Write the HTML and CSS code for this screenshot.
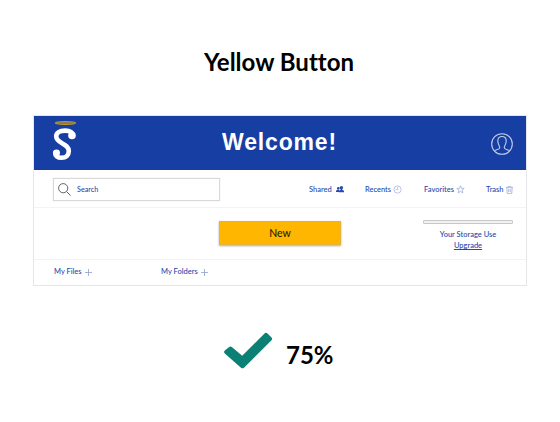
FILE: index.html
```html
<!DOCTYPE html>
<html lang="en">
<head>
<meta charset="utf-8">
<title>Yellow Button</title>
<link rel="stylesheet" href="styles.css">
</head>
<body>
<h1 class="title">Yellow Button</h1>
<main class="panel">
  <header class="banner">
    <svg class="logo" width="26" height="42" viewBox="0 0 26 42" fill="none">
      <ellipse cx="13.5" cy="3" rx="10" ry="1.3" fill="#776f60" stroke="#c39a22" stroke-width="1.2"/>
      <path d="M20.5 16C21 12.5 18 10.6 13.2 10.6C7.5 10.6 4.2 12.8 4.2 16.3C4.2 24 16.8 23 16.8 31C16.8 35.2 14 37.8 9.5 37.8C5.5 37.8 3 36 3.2 32.5" stroke="#fff" stroke-width="4.6" stroke-linecap="round"/>
      <circle cx="20" cy="15.4" r="3.8" fill="#fff"/>
      <circle cx="4.6" cy="32.8" r="3.4" fill="#fff"/>
    </svg>
    <h2 class="welcome">Welcome!</h2>
    <svg class="avatar" width="24" height="24" viewBox="0 0 24 24" fill="none" stroke="#c3cee9" stroke-width="1.1">
      <circle cx="12" cy="12" r="10.3"/>
      <path d="M4.2 19C5.5 17.4 9.8 17.8 9.8 15.5C9.8 14 7.8 12.7 7.8 9C7.8 6 9.4 4.5 12 4.5S16.2 6 16.2 9C16.2 12.7 14.2 14 14.2 15.5C14.2 17.8 18.5 17.4 19.8 19"/>
    </svg>
  </header>
  <nav class="toolbar">
    <div class="search">
      <svg width="13" height="13" viewBox="0 0 13 13" fill="none" stroke="#626262"><circle cx="5.2" cy="5.2" r="4.6"/><path d="M8.6 8.6L12.5 12.5"/></svg>
      <span>Search</span>
    </div>
    <a class="link shared">Shared
      <svg width="8" height="7" viewBox="0 0 8 7" fill="#294bad"><circle cx="2.3" cy="2.2" r="1.3"/><path d="M0 6V4.8L1.7 3.6H3V6z"/><circle cx="5.4" cy="1.7" r="1.7"/><path d="M2.8 6.2V4.8L4.7 3.8V3H6.1V3.8L8 4.8V6.2z"/></svg>
    </a>
    <a class="link recents">Recents
      <svg width="9" height="9" viewBox="0 0 9 9" fill="none" stroke="#9dadd8" stroke-width=".7"><circle cx="4.5" cy="4.5" r="3.6"/><path d="M4.7 2V4.7H2.5"/></svg>
    </a>
    <a class="link favorites">Favorites
      <svg width="9" height="9" viewBox="0 0 9 9" fill="none" stroke="#8fa2d4" stroke-width=".7"><path d="M4.5 .8L5.5 3.3L8.2 3.5L6.1 5.2L6.8 7.9L4.5 6.4L2.2 7.9L2.9 5.2L.8 3.5L3.5 3.3z"/></svg>
    </a>
    <a class="link trash">Trash
      <svg width="7" height="8" viewBox="0 0 7 8" fill="none" stroke="#8fa2d4" stroke-width=".7"><path d="M0 1.4H7M2.3 1.2V.4H4.7V1.2M.9 1.5L1.2 7.4H5.8L6.1 1.5M2.7 2.8V6M4.3 2.8V6"/></svg>
    </a>
  </nav>
  <section class="actions">
    <button class="new">New</button>
    <div class="storage">
      <div class="meter"></div>
      <span>Your Storage Use</span>
      <a class="upgrade">Upgrade</a>
    </div>
  </section>
  <footer class="files">
    <span class="group my-files">My Files <svg width="7" height="7" viewBox="0 0 7 7" stroke="#8ca0d3" stroke-width=".8"><path d="M3.5 0V7M0 3.5H7"/></svg></span>
    <span class="group">My Folders <svg width="7" height="7" viewBox="0 0 7 7" stroke="#8ca0d3" stroke-width=".8"><path d="M3.5 0V7M0 3.5H7"/></svg></span>
  </footer>
</main>
<div class="result">
  <svg width="50" height="38" viewBox="0 0 50 38" fill="#0b8075"><path d="M.8 18.6L5.2 15Q6.5 14 7.8 15L18.2 23.8L40.5 1.5Q42 .2 43.5 1.5L47.5 5.4Q48.8 6.8 47.5 8.2L20 35.7Q18.5 37 17 35.7L.8 21.4Q-.6 20 .8 18.6z"/></svg>
  <span>75%</span>
</div>
</body>
</html>
```
FILE: styles.css
```css
* { box-sizing: border-box; }
body {
  margin: 0;
  width: 560px;
  height: 422px;
  overflow: hidden;
  background: #fff;
  font-family: Lato, sans-serif;
  font-variant-ligatures: none;
  color: #000;
}
.title {
  margin: 0;
  padding-top: 47px;
  height: 115px;
  font-size: 24px;
  line-height: 30px;
  font-weight: 700;
  text-align: center;
  padding-right: 2px;
}
.panel {
  margin-left: 33px;
  width: 494px;
  height: 171px;
  border: 1px solid #e4e6ea;
  color: #2749ad;
  font-size: 7.5px;
  font-weight: 500;
  line-height: 10px;
}
.banner {
  display: flex;
  height: 54px;
  background: #173ea3;
}
.logo { margin: 4px 0 0 18px; flex: none; }
.welcome {
  margin: 11px 0 0 144px;
  width: 116px;
  font: 700 23px/30px "Liberation Sans", Arial, sans-serif;
  letter-spacing: 0.85px;
  color: #fff;
  white-space: nowrap;
}
.avatar { margin: 16px 0 0 152px; flex: none; }
.toolbar {
  display: flex;
  height: 38px;
  border-bottom: 1px solid #f3f3f3;
}
.search {
  display: flex;
  align-items: center;
  gap: 6px;
  margin: 8px 0 0 19px;
  width: 167px;
  height: 23px;
  padding-left: 4px;
  border: 1px solid #d9d9d9;
  box-shadow: 0 0 1px #ddd;
  font-size: 7.2px;
}
.link {
  display: flex;
  align-items: center;
  gap: 2px;
  height: 10px;
  margin-top: 15px;
  white-space: nowrap;
}
.link svg { margin-bottom: 1px; }
.shared { margin-left: 89px; width: 56px; gap: 4px; }
.recents { width: 59px; }
.favorites { width: 62px; }
.actions {
  display: flex;
  height: 52px;
  border-bottom: 1px solid #f3f3f3;
}
.new {
  margin: 13px 0 0 185px;
  width: 122px;
  height: 24px;
  padding: 0;
  border: 1px solid #e2b43c;
  background: #ffb600;
  box-shadow: 0 1px 2px #aaa;
  font: 500 10.5px/20px Lato, sans-serif;
  color: #2a2000;
}
.storage {
  display: flex;
  flex-direction: column;
  align-items: center;
  margin: 12px 0 0 82px;
  width: 90px;
  line-height: 11px;
}
.meter {
  width: 90px;
  height: 4px;
  margin-bottom: 5px;
  border: 1px solid #c8c8c8;
  border-radius: 1px;
  background: #f1f1f1;
}
.upgrade { text-decoration: underline; }
.files { display: flex; padding: 7px 0 0 20px; }
.group { display: flex; align-items: center; gap: 3px; height: 10px; }
.group svg { margin-top: 1px; }
.my-files { width: 107px; }
.result {
  display: flex;
  margin: 46px 0 0 224px;
  font-size: 24px;
  line-height: 30px;
  font-weight: 700;
}
.result span { margin: 8px 0 0 12px; }
```
